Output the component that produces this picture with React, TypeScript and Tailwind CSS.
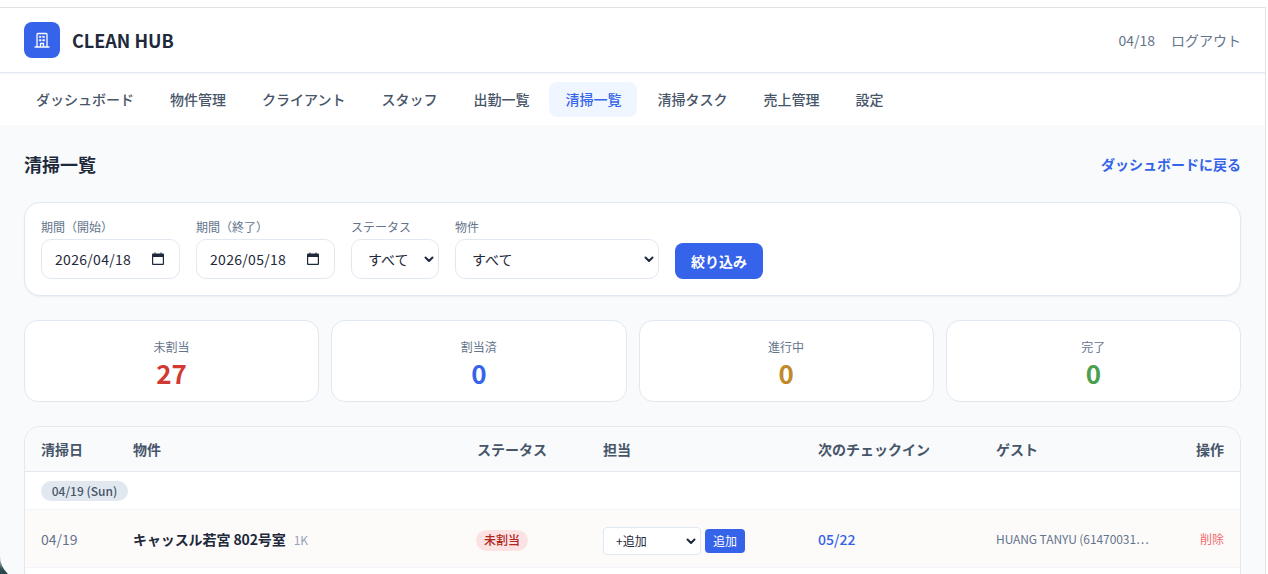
import React from "react";

const nav = ["ダッシュボード", "物件管理", "クライアント", "スタッフ", "出勤一覧", "清掃一覧", "清掃タスク", "売上管理", "設定"];
const cols = "grid grid-cols-[92px_344px_126px_215px_178px_1fr_60px]";

function Field({ label, children }: { label: string; children: React.ReactNode }) {
  return (
    <div className="flex flex-col">
      <label className="text-[12px] leading-[18px] text-[#64748b] mb-[3px]">{label}</label>
      {children}
    </div>
  );
}

function Stat({ label, value, color }: { label: string; value: string; color: string }) {
  return (
    <div className="bg-white border border-[#e2e8f0] rounded-[14px] h-[82px] flex flex-col items-center pt-[17px]">
      <div className="text-[12px] leading-[18px] text-[#64748b]">{label}</div>
      <div className={`mt-[3px] text-[26px] leading-[28px] font-bold ${color}`}>{value}</div>
    </div>
  );
}

function CalendarIcon() {
  return (
    <svg width="14" height="14" viewBox="0 0 14 14">
      <path d="M2 1.5h1.5V0.5h1v1h5v-1h1v1H12a1 1 0 0 1 1 1V12a1 1 0 0 1-1 1H2a1 1 0 0 1-1-1V2.5a1 1 0 0 1 1-1Z M2.2 5v6.8h9.6V5Z" fill="#1e293b" fillRule="evenodd" />
    </svg>
  );
}

function Chevron() {
  return (
    <svg width="12" height="12" viewBox="0 0 12 12" fill="none" stroke="#1e293b" strokeWidth="2" strokeLinecap="round" strokeLinejoin="round">
      <path d="M2.5 4.5 6 8l3.5-3.5" />
    </svg>
  );
}

export default function App() {
  return (
    <div
      className="h-[574px] w-[1268px] overflow-hidden bg-white relative"
      style={{ fontFamily: '"Noto Sans CJK JP", "Noto Sans", sans-serif' }}
    >
      <div className="absolute left-0 bottom-0 w-[12px] h-[20px] bg-[linear-gradient(180deg,#dfe3e4_0%,#9aa8aa_35%,#2f4f55_75%,#27464c_100%)]" />
      <div className="relative mr-[2px] mt-[7px] border-t border-r border-[#e2e2e2] h-[573px] overflow-hidden bg-[#f8fafc] rounded-bl-[24px]">
        <header className="relative z-10 h-[65px] bg-white border-b border-[#e2e8f0] shadow-[0_1px_2px_rgba(15,23,42,0.05)] flex items-center justify-between px-[24px]">
          <div className="flex items-center gap-[12px]">
            <div className="w-[36px] h-[36px] rounded-[8px] bg-[#3563e9] flex items-center justify-center">
              <svg width="16" height="16" viewBox="0 0 16 16" fill="none" stroke="white" strokeWidth="1.3" strokeLinecap="round" strokeLinejoin="round">
                <path d="M1 15h14M3 15V2.5a1 1 0 0 1 1-1h8a1 1 0 0 1 1 1V15M6.5 15v-3.5h3V15" />
                <path d="M5.5 4.2h1.6v1.4H5.5ZM8.9 4.2h1.6v1.4H8.9ZM5.5 7.6h1.6V9H5.5ZM8.9 7.6h1.6V9H8.9Z" fill="white" strokeWidth="0.5" />
              </svg>
            </div>
            <div className="text-[18px] leading-[26px] font-bold text-[#1e293b]">CLEAN HUB</div>
          </div>
          <div className="flex items-center gap-[16px] text-[14px] text-[#64748b]">
            <span>04/18</span>
            <span>ログアウト</span>
          </div>
        </header>
        <nav className="h-[52px] bg-white flex items-center gap-[4px] pl-[20px] pt-[1px]">
          {nav.map((n) => (
            <div
              key={n}
              className={`h-[35px] px-[16px] rounded-[8px] flex items-center text-[14px] font-medium ${
                n === "清掃一覧" ? "bg-[#eff6ff] text-[#3563e9]" : "text-[#475569]"
              }`}
            >
              {n}
            </div>
          ))}
        </nav>
        <main className="px-[24px]">
          <div className="flex items-center justify-between h-[24px] mt-[27px]">
            <h1 className="text-[18px] font-bold text-[#1e293b]">清掃一覧</h1>
            <a className="text-[14px] font-bold text-[#3563e9]">ダッシュボードに戻る</a>
          </div>
          <div className="mt-[26px] h-[94px] bg-white border border-[#e2e8f0] rounded-[16px] shadow-[0_1px_2px_rgba(15,23,42,0.05)] flex items-end gap-[16px] px-[16px] pb-[16px]">
            <Field label="期間（開始）">
              <div className="w-[139px] h-[40px] border border-[#e2e8f0] rounded-[10px] bg-white flex items-center justify-between pl-[13px] pr-[14px] text-[14px] tracking-[0.3px] text-[#1e293b]">
                <span>2026/04/18</span>
                <CalendarIcon />
              </div>
            </Field>
            <Field label="期間（終了）">
              <div className="w-[139px] h-[40px] border border-[#e2e8f0] rounded-[10px] bg-white flex items-center justify-between pl-[13px] pr-[14px] text-[14px] tracking-[0.3px] text-[#1e293b]">
                <span>2026/05/18</span>
                <CalendarIcon />
              </div>
            </Field>
            <Field label="ステータス">
              <div className="w-[88px] h-[40px] border border-[#e2e8f0] rounded-[10px] bg-white flex items-center justify-between pl-[16px] pr-[3px] text-[14px] text-[#1e293b]">
                <span>すべて</span>
                <Chevron />
              </div>
            </Field>
            <Field label="物件">
              <div className="w-[204px] h-[40px] border border-[#e2e8f0] rounded-[10px] bg-white flex items-center justify-between pl-[16px] pr-[3px] text-[14px] text-[#1e293b]">
                <span>すべて</span>
                <Chevron />
              </div>
            </Field>
            <button className="w-[88px] h-[36px] rounded-[8px] bg-[#3563e9] text-white text-[14px] font-bold">絞り込み</button>
          </div>
          <div className="mt-[24px] grid grid-cols-4 gap-[12px]">
            <Stat label="未割当" value="27" color="text-[#d03a33]" />
            <Stat label="割当済" value="0" color="text-[#3563e9]" />
            <Stat label="進行中" value="0" color="text-[#c2892b]" />
            <Stat label="完了" value="0" color="text-[#4c9f50]" />
          </div>
          <div className="mt-[24px] bg-white border border-[#e2e8f0] rounded-t-[16px] overflow-hidden">
            <div className={`${cols} h-[45px] items-center bg-[#f8fafc] border-b border-[#e2e8f0] px-[16px] text-[14px] font-bold text-[#475569]`}>
              <div>清掃日</div>
              <div>物件</div>
              <div>ステータス</div>
              <div>担当</div>
              <div>次のチェックイン</div>
              <div>ゲスト</div>
              <div className="text-right">操作</div>
            </div>
            <div className="h-[38px] flex items-center pl-[16px] border-b border-[#f1f5f9]">
              <span className="h-[20px] w-[87px] justify-center rounded-full bg-[#e2e8f0] text-[12px] font-medium text-[#475569] flex items-center">04/19 (Sun)</span>
            </div>
            <div className={`${cols} h-[58px] items-center bg-[#fdfbfa] border-b border-[#f1f5f9] px-[16px] pt-[1px]`}>
              <div className="text-[14px] text-[#64748b]">04/19</div>
              <div className="text-[14px] font-semibold tracking-[-0.1px] text-[#1e293b] whitespace-nowrap">
                キャッスル若宮 802号室<span className="ml-[8px] text-[12px] font-normal text-[#94a3b8]">1K</span>
              </div>
              <div className="-mt-[1px]">
                <span className="inline-flex h-[21px] -ml-[1px] items-center rounded-full bg-[#fbe3e3] px-[8px] text-[12px] font-medium text-[#b3261e]">未割当</span>
              </div>
              <div className="flex items-center gap-[4px] mt-[3px]">
                <div className="w-[98px] h-[28px] border border-[#e2e8f0] rounded-[4px] bg-white flex items-center justify-between pl-[12px] pr-[3px] text-[12px] text-[#1e293b]">
                  <span>+追加</span>
                  <Chevron />
                </div>
                <button className="w-[40px] h-[24px] rounded-[4px] bg-[#3563e9] text-white text-[12px]">追加</button>
              </div>
              <div className="text-[14px] font-medium text-[#3563e9]">05/22</div>
              <div className="text-[12px] tracking-[-0.08px] text-[#64748b] whitespace-nowrap">HUANG TANYU (61470031…</div>
              <div className="text-right text-[12px] text-[#ef6b6b]">削除</div>
            </div>
            <div className="h-[40px] bg-white" />
          </div>
        </main>
      </div>
    </div>
  );
}
